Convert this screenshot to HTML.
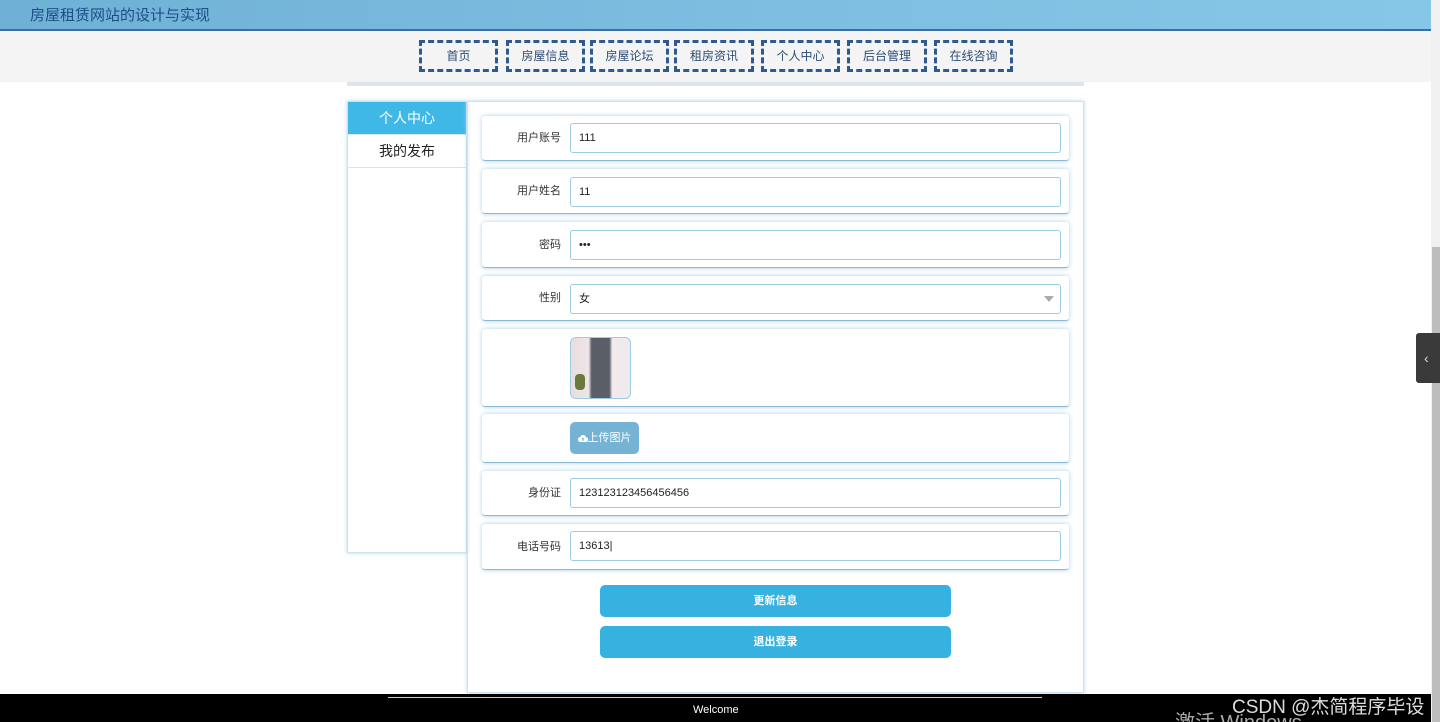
<!DOCTYPE html><html><head><meta charset="utf-8"><style>
*{box-sizing:border-box;margin:0;padding:0}
html,body{width:1440px;height:722px;overflow:hidden}
body{background:#fff;font-family:"Liberation Sans","Noto Sans CJK SC",sans-serif;position:relative}
.hd{position:absolute;left:0;top:0;width:1431px;height:31px;background:linear-gradient(90deg,#6fb0d6,#7dbde0 50%,#86c6e6);border-bottom:2px solid #3a6ea5}
.hd span{position:absolute;left:30px;top:4px;font-size:15px;color:#1d4f86}
.nav{position:absolute;left:0;top:31px;width:1431px;height:51px;background:#f4f4f4}
.nav a{position:absolute;top:9px;height:32px;border:3px dashed #2f5a8e;font-size:12px;color:#2d4d75;text-align:center;line-height:26px;text-decoration:none}
.bar{position:absolute;left:347px;top:82px;width:737px;height:4px;background:#dfe6ea}
.side{position:absolute;left:347px;top:101px;width:120px;height:452px;border:1px solid #cfe3ef;box-shadow:0 0 4px #b9d7ea}
.side div{height:33px;text-align:center;line-height:33px;font-size:14px;border-bottom:1px solid #d6e6ef;color:#222}
.side .on{background:#3fb8e8;color:#fff}
.panel{position:absolute;left:467px;top:101px;width:617px;height:592px;border:1px solid #cfe3ef;box-shadow:0 0 4px #b9d7ea}
.row{position:absolute;left:482px;width:587px;background:#fff;border-radius:3px;box-shadow:0 0 5px #a9cfe4;border-bottom:1px solid #88b9d6}
.row label{position:absolute;right:508px;font-size:11px;line-height:13px;color:#333}
.inp{position:absolute;left:88px;width:491px;height:30px;border:1px solid #9ccbe2;border-radius:3px;font-size:11px;line-height:13px;color:#222;padding:8px 8px}
.btn{position:absolute;left:600px;width:351px;height:32px;background:#36b1e0;border-radius:5px;color:#fff;font-size:11px;text-align:center;line-height:32px;font-weight:bold}
.ft{position:absolute;left:0;top:694px;width:1431px;height:28px;background:#000;color:#fff;overflow:hidden}
.sb{position:absolute;left:1431px;top:0;width:9px;height:722px;background:#f0f0f0}
</style></head><body>
<div class="hd"><span>房屋租赁网站的设计与实现</span></div>
<div class="nav">
<a style="left:419px;width:79px">首页</a>
<a style="left:506px;width:79px">房屋信息</a>
<a style="left:590px;width:79px">房屋论坛</a>
<a style="left:674px;width:80px">租房资讯</a>
<a style="left:761px;width:79px">个人中心</a>
<a style="left:847px;width:80px">后台管理</a>
<a style="left:934px;width:79px">在线咨询</a>
</div>
<div class="bar"></div>
<div class="side"><div class="on">个人中心</div><div>我的发布</div></div>
<div class="panel"></div>
<div class="row" style="top:116px;height:45px"><label style="top:16px">用户账号</label><div class="inp" style="top:7px">111</div></div>
<div class="row" style="top:169px;height:45px"><label style="top:16px">用户姓名</label><div class="inp" style="top:8px">11</div></div>
<div class="row" style="top:222px;height:46px"><label style="top:17px">密码</label><div class="inp" style="top:8px">•••</div></div>
<div class="row" style="top:276px;height:45px"><label style="top:16px">性别</label><div class="inp" style="top:8px">女<span style="position:absolute;right:6px;top:11px;border:5px solid transparent;border-top:6px solid #aaa"></span></div></div>
<div class="row" style="top:329px;height:78px"><div style="position:absolute;left:88px;top:8px;width:61px;height:62px;border:1px solid #9ccbe2;border-radius:6px;background:linear-gradient(90deg,#e9dde0 0,#efe5e8 30%,#5a5e66 35%,#5a5e66 65%,#f1eaec 70%);overflow:hidden"><div style="position:absolute;left:4px;top:36px;width:10px;height:16px;background:#6b7a3a;border-radius:4px"></div></div></div>
<div class="row" style="top:414px;height:49px"><div style="position:absolute;left:88px;top:8px;width:69px;height:32px;background:#74b3d4;border-radius:5px;color:#fff;font-size:11px;line-height:32px;text-align:center"><svg width="10" height="8" viewBox="0 0 10 8" style="vertical-align:-1px"><path d="M2.5 8A2.5 2.5 0 0 1 2.3 3 3 3 0 0 1 8 3.2 2.4 2.4 0 0 1 7.6 8Z" fill="#fff"/><path d="M5 3.5 3.3 5.3h1.2V7h1V5.3h1.2Z" fill="#74b3d4"/></svg>上传图片</div></div>
<div class="row" style="top:471px;height:45px"><label style="top:16px">身份证</label><div class="inp" style="top:7px">123123123456456456</div></div>
<div class="row" style="top:524px;height:46px"><label style="top:17px">电话号码</label><div class="inp" style="top:7px">13613|</div></div>
<div class="btn" style="top:585px">更新信息</div>
<div class="btn" style="top:626px">退出登录</div>
<div class="ft"><div style="position:absolute;left:388px;top:3px;width:654px;height:1px;background:#ccc"></div><div style="position:absolute;left:693px;top:10px;font-size:11px">Welcome</div><div style="position:absolute;left:1232px;top:-2px;font-size:19px;color:#ddd">CSDN @杰简程序毕设</div><div style="position:absolute;left:1175px;top:12px;font-size:20px;color:#aaa">激活 Windows</div></div>
<div class="sb"><div style="position:absolute;left:1px;top:247px;width:8px;height:475px;background:#bdbdbd"></div></div>
<div style="position:absolute;left:1416px;top:333px;width:24px;height:50px;background:#3a3a3a;border-radius:3px 0 0 3px;color:#ddd;font-size:14px;line-height:50px;padding-left:8px">‹</div>
</body></html>
